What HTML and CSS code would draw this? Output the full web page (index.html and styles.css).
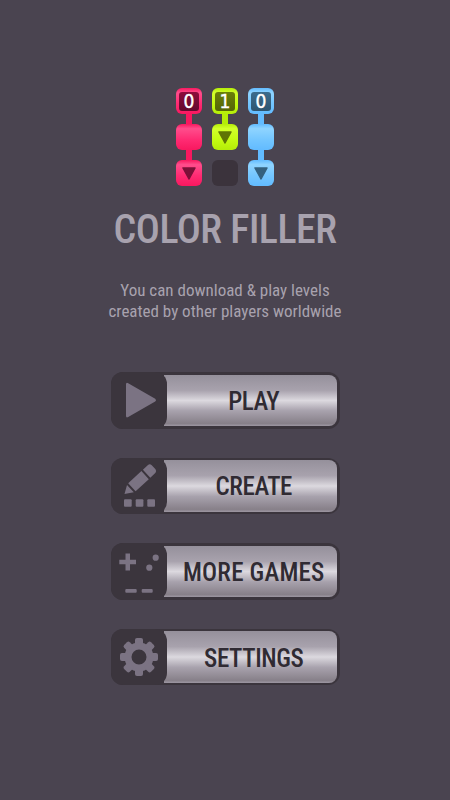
FILE: index.html
```html
<!DOCTYPE html>
<html lang="en">
<head>
<meta charset="utf-8">
<title>Color Filler</title>
<link rel="stylesheet" href="styles.css">
</head>
<body>
<main class="screen">
  <div class="logo">
    <div class="cell pink link-down"><span class="digit">0</span></div>
    <div class="cell lime link-down"><span class="digit">1</span></div>
    <div class="cell blue link-down"><span class="digit">0</span></div>
    <div class="cell pink link-down"></div>
    <div class="cell lime"><svg class="tri" viewBox="0 0 14 13"><path d="M1 1H13L7 12Z"/></svg></div>
    <div class="cell blue link-down"></div>
    <div class="cell pink"><svg class="tri" viewBox="0 0 14 13"><path d="M1 1H13L7 12Z"/></svg></div>
    <div class="cell empty"></div>
    <div class="cell blue"><svg class="tri" viewBox="0 0 14 13"><path d="M1 1H13L7 12Z"/></svg></div>
  </div>
  <h1 class="title">COLOR FILLER</h1>
  <p class="tagline">You can download &amp; play levels<br>created by other players worldwide</p>
  <nav class="menu">
    <a class="btn">
      <span class="icon"><svg viewBox="0 0 57 57"><path d="M16 12.500Q16 10 18.200 11.300L45.200 26.800Q47 28.200 45.200 29.600L18.200 45Q16 46.200 16 43.800Z"/></svg></span>
      <span class="face"><span class="label">PLAY</span></span>
    </a>
    <a class="btn">
      <span class="icon"><svg viewBox="0 0 57 57"><path d="M14.500 36L17 26.900L23.800 34.300ZM18.200 25.200L31.400 13.050L38.800 21.150L25.600 33.300ZM32.900 11.700L38 7Q39.800 5.600 41.500 7L45.500 11.200Q46.800 13 45.500 14.800L40.300 19.800Z"/><rect x="14" y="41.300" width="7.700" height="7.400" rx="1"/><rect x="25.700" y="41.300" width="7.700" height="7.400" rx="1"/><rect x="37.300" y="41.300" width="7.700" height="7.400" rx="1"/></svg></span>
      <span class="face"><span class="label">CREATE</span></span>
    </a>
    <a class="btn">
      <span class="icon"><svg viewBox="0 0 57 57"><path d="M15.500 10.500H20V16.800H26V21.300H20V27.500H15.500V21.300H9.300V16.800H15.500Z"/><circle cx="45.700" cy="14.700" r="3.100"/><circle cx="39.300" cy="24.700" r="3.100"/><rect x="15.300" y="46" width="11.400" height="3.800" rx="1"/><rect x="31.700" y="46" width="11" height="3.800" rx="1"/></svg></span>
      <span class="face"><span class="label wide">MORE GAMES</span></span>
    </a>
    <a class="btn">
      <span class="icon"><svg viewBox="0 0 57 57"><g class="gear"><circle class="gear-ring" cx="29" cy="28" r="11"/><rect x="25" y="9" width="8" height="8" rx="2"/><rect x="25" y="9" width="8" height="8" rx="2" transform="rotate(45 29 28)"/><rect x="25" y="9" width="8" height="8" rx="2" transform="rotate(90 29 28)"/><rect x="25" y="9" width="8" height="8" rx="2" transform="rotate(135 29 28)"/><rect x="25" y="9" width="8" height="8" rx="2" transform="rotate(180 29 28)"/><rect x="25" y="9" width="8" height="8" rx="2" transform="rotate(225 29 28)"/><rect x="25" y="9" width="8" height="8" rx="2" transform="rotate(270 29 28)"/><rect x="25" y="9" width="8" height="8" rx="2" transform="rotate(315 29 28)"/></g></svg></span>
      <span class="face"><span class="label">SETTINGS</span></span>
    </a>
  </nav>
</main>
</body>
</html>
```

FILE: styles.css
```css
* { box-sizing: border-box; }
html, body { margin: 0; height: 100%; }
body { background: #4a4450; font-family: "Liberation Sans Narrow", "Roboto Condensed", Roboto, sans-serif; }
.screen { width: 450px; height: 800px; padding-top: 88px; display: flex; flex-direction: column; align-items: center; overflow: hidden; }

.logo { display: grid; grid-template-columns: repeat(3, 26px); grid-auto-rows: 26px; gap: 10px; }
.cell { position: relative; border-radius: 6px; display: flex; align-items: center; justify-content: center; }
.pink { background: linear-gradient(#f8185f 0, #ff4d8c 18%, #ff2b73 60%, #f8185f 100%); }
.lime { background: linear-gradient(#b4ec08 0, #d2ff2a 18%, #c4fb12 60%, #b4ec08 100%); }
.blue { background: linear-gradient(#62bbff 0, #8fd4ff 18%, #74c6ff 60%, #62bbff 100%); }
.empty { background: #3b333c; }
.link-down::after { content: ""; position: absolute; left: 50%; top: 100%; width: 6px; height: 10px; margin-left: -3px; z-index: 1; }
.pink.link-down::after { background: #f8185f; }
.lime.link-down::after { background: #b4ec08; }
.blue.link-down::after { background: #62bbff; }
.digit { width: 20px; height: 19px; border-radius: 3px; display: flex; align-items: center; justify-content: center; color: #fff; font: 400 19px/1 "DejaVu Sans", sans-serif; font-stretch: condensed; -webkit-text-stroke: 0.4px #fff; }
.pink .digit { background: linear-gradient(#8c0c3c, #620a2e); }
.lime .digit { background: linear-gradient(#6a7f08, #546606); }
.blue .digit { background: linear-gradient(#3c6c8c, #2e5570); }
.tri { width: 14px; height: 13px; }
.tri path { stroke-width: 1.500; stroke-linejoin: round; }
.pink .tri path { fill: #7c1038; stroke: #7c1038; }
.lime .tri path { fill: #5f7404; stroke: #5f7404; }
.blue .tri path { fill: #34617f; stroke: #34617f; }

.title { margin: 21px 0 0; font-size: 40px; line-height: 46px; font-weight: 500; letter-spacing: -0.500px; color: #a8a2ae; }
.tagline { margin: 27px 0 0; font-size: 17px; line-height: 21px; text-align: center; color: #a8a2ae; }

.menu { margin-top: 50px; display: flex; flex-direction: column; gap: 29.170px; }
.btn { width: 229px; height: 56.500px; background: #3b353d; border-radius: 12px; padding: 2.500px; padding-left: 0; display: flex; }
.icon { width: 56px; flex: none; position: relative; z-index: 1; background: #3b353d; border-radius: 12px; margin: -2.500px 0; }
.icon svg { display: block; width: 57px; height: 57px; margin-left: -1px; fill: #7b7383; }
.gear-ring { fill: none; stroke: #7b7383; stroke-width: 7; }
.face { flex: 1; margin-left: -3px; border-radius: 0 8px 8px 0; display: flex; align-items: center; justify-content: center; padding-left: 7px; background: linear-gradient(#95909b 0, #a8a2ad 30%, #dcd9df 50%, #a8a2ad 70%, #878089 95%, #9d97a2 100%); }
.label { font-size: 25px; line-height: 1; font-weight: 500; letter-spacing: -0.400px; color: #302b33; transform: translateY(1px); }
.label.wide { letter-spacing: 0.200px; }
```
